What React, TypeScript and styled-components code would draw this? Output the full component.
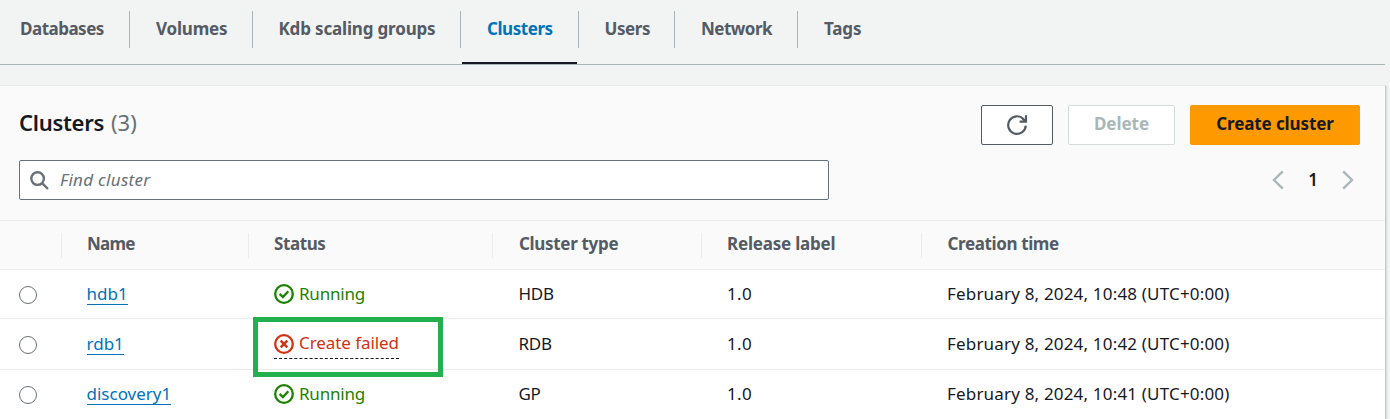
import React from "react";
import styled, { createGlobalStyle, css } from "styled-components";

const GlobalStyle = createGlobalStyle`
  *, *::before, *::after { box-sizing: border-box; }
  body {
    margin: 0;
    background: #f2f3f3;
    overflow: hidden;
    font-family: "Noto Sans", sans-serif;
    font-size: 17px;
    line-height: 24px;
    color: #16191f;
  }
`;

const Page = styled.main`
  position: relative;
  width: 1390px;
  height: 419px;
  padding-right: 4px;
  overflow: hidden;
`;

const Tracked = styled.span<{ $track?: number }>`
  letter-spacing: ${({ $track = 0 }) => $track}px;
  white-space: nowrap;
`;

const TabBar = styled.nav`
  display: flex;
  height: 65px;
  margin-right: 1px;
  border-bottom: 1px solid #aab7b8;
`;

const Tab = styled.a<{ $width: number; $active?: boolean }>`
  display: flex;
  flex-direction: column;
  justify-content: space-between;
  width: ${({ $width }) => $width}px;
  padding-top: 11px;
  font-weight: 700;
  color: ${({ $active }) => ($active ? "#0073bb" : "#545b64")};

  &:last-child > span { border-right: none; }
  ${({ $active }) =>
    $active &&
    css`
      &::after {
        content: "";
        height: 2px;
        margin: 0 2px 0 1px;
        background: #16191f;
      }
    `}
`;

const TabLabel = styled.span<{ $indent: number }>`
  display: flex;
  align-items: center;
  height: 37px;
  padding-left: ${({ $indent }) => $indent}px;
  padding-bottom: 2px;
  border-right: 1px solid #aab7b8;
`;

const Card = styled.section`
  height: 360px;
  margin-top: 20px;
  background: #fff;
  border-top: 1px solid #eaeded;
  border-right: 1px solid #c6cbcc;
  box-shadow: 1px 1px 1px rgba(0, 28, 36, 0.1);
`;

const CardHeader = styled.header`
  height: 134px;
  padding: 19px 25px 0 19px;
  background: #fafafa;
`;

const HeaderRow = styled.div`
  display: flex;
  align-items: center;
  justify-content: space-between;
  height: 40px;
  margin-bottom: 15px;
`;

const Title = styled.h2`
  margin: 0;
  padding-bottom: 6px;
  font-size: 22px;
  font-weight: 600;
`;

const Count = styled.span`
  margin-left: 7px;
  font-weight: 400;
  color: #687078;
`;

const Actions = styled.div`
  display: flex;
  gap: 15px;
`;

const tones = {
  normal: css`background: #fff; border-color: #545b64; color: #545b64;`,
  disabled: css`background: #fff; border-color: #d5dbdb; color: #aab7b8;`,
  primary: css`background: #ff9900; border-color: #ff9900; color: #16191f;`,
};

const Button = styled.button<{ $tone: keyof typeof tones; $width: number }>`
  display: flex;
  align-items: center;
  justify-content: center;
  width: ${({ $width }) => $width}px;
  height: 40px;
  padding: 0 0 2px;
  border: 1px solid;
  border-radius: 2px;
  font: 700 17px/24px "Noto Sans", sans-serif;
  ${({ $tone }) => tones[$tone]}

  svg { margin-top: 2px; }
`;

const SearchBox = styled.div`
  display: flex;
  align-items: center;
  width: 810px;
  height: 40px;
  padding-left: 10px;
  gap: 11px;
  background: #fff;
  border: 1px solid #687078;
  border-radius: 2px;
  font-style: italic;
  color: #687078;

  span { padding-bottom: 1px; }
`;

const Pager = styled.div`
  display: flex;
  align-items: center;
  gap: 24px;
  padding-right: 6px;
  color: #aab7b8;

  strong { width: 10px; font-weight: 600; color: #16191f; text-align: center; }
`;

const columns = "62px 187px 244px 209px 220px 1fr";

const HeadRow = styled.div`
  display: grid;
  grid-template-columns: ${columns};
  align-items: center;
  height: 50px;
  background: #fafafa;
  border-top: 1px solid #eaeded;
  border-bottom: 1px solid #eaeded;
  font-weight: 700;
  color: #545b64;
`;

const HeadCell = styled.div<{ $indent?: number }>`
  display: flex;
  align-items: center;
  height: 25px;
  padding-left: ${({ $indent = 25 }) => $indent}px;
  padding-bottom: 2px;
  border-right: 1px solid #eaeded;

  &:last-child { border-right: none; }
`;

const Row = styled.div<{ $height: number }>`
  display: grid;
  grid-template-columns: ${columns};
  align-items: center;
  height: ${({ $height }) => $height}px;
  border-bottom: 1px solid #eaeded;

  &:last-child { border-bottom-color: transparent; }
`;

const Cell = styled.div<{ $indent?: number }>`
  display: flex;
  align-items: center;
  height: 24px;
  padding-left: ${({ $indent = 25 }) => $indent}px;
`;

const Radio = styled.span`
  width: 18px;
  height: 18px;
  margin: 1px 0 0 19px;
  border: 1px solid #687078;
  border-radius: 50%;
  background: #fff;
`;

const Link = styled.a`
  height: 23px;
  margin-bottom: 2px;
  line-height: 24px;
  border-bottom: 1px solid #0073bb;
  color: #0073bb;
`;

const Status = styled.span<{ $failed?: boolean }>`
  display: flex;
  align-items: center;
  gap: 5px;
  color: ${({ $failed }) => ($failed ? "#d13212" : "#1d8102")};
  ${({ $failed }) =>
    $failed &&
    css`
      height: 27px;
      margin-top: 3px;
      padding-bottom: 4px;
      border-bottom: 1px dashed #16191f;

      svg { margin-top: 2px; }
    `}
`;

const Highlight = styled.div`
  position: absolute;
  left: 253px;
  top: 317px;
  width: 190px;
  height: 60px;
  border: 5px solid #22b14c;
`;

const RefreshIcon = () => (
  <svg width="22" height="22" viewBox="0 0 22 22" fill="none" stroke="currentColor" strokeWidth="2.2">
    <path d="M19.8 11.6A8.8 8.8 0 1 1 17.4 5" />
    <path d="M20 1.2V7.6H13.6" />
    <path d="M16.6 4.6L20 7.6" />
  </svg>
);

const SearchIcon = () => (
  <svg width="19" height="19" viewBox="0 0 19 19" fill="none" stroke="currentColor" strokeWidth="2.4">
    <circle cx="7.6" cy="7.6" r="6.3" />
    <path d="M12.1 12.1L18 18" />
  </svg>
);

const Chevron = ({ right = false }: { right?: boolean }) => (
  <svg width="12" height="20" viewBox="0 0 12 20" fill="none" stroke="currentColor" strokeWidth="2.4">
    <path d={right ? "M1.2 1.4L10 10L1.2 18.6" : "M10.8 1.4L2 10L10.8 18.6"} />
  </svg>
);

const StatusIcon = ({ failed = false }: { failed?: boolean }) => (
  <svg width="20" height="20" viewBox="0 0 20 20" fill="none" stroke="currentColor" strokeWidth="2.3">
    <circle cx="10" cy="10" r="8.8" />
    {failed ? <path d="M6.7 6.7L13.3 13.3M13.3 6.7L6.7 13.3" strokeWidth="2.5" /> : <path d="M5.6 9.9L8.9 13L14.3 7.2" />}
  </svg>
);

const tabs = [
  { label: "Databases", width: 130, indent: 20, track: -0.5 },
  { label: "Volumes", width: 123, indent: 26, track: -0.2 },
  { label: "Kdb scaling groups", width: 208, indent: 25.5, track: -0.17 },
  { label: "Clusters", width: 118, indent: 26, track: -0.45 },
  { label: "Users", width: 96, indent: 25.5, track: -0.4 },
  { label: "Network", width: 123, indent: 26, track: -0.52 },
  { label: "Tags", width: 90, indent: 26, track: -0.13 },
];

const activeTab = "Clusters";

const headings = [
  { label: "Name", track: -0.8 },
  { label: "Status", track: -0.4 },
  { label: "Cluster type", track: -0.32, indent: 26 },
  { label: "Release label", track: -0.2 },
  { label: "Creation time", track: -0.38, indent: 25.5 },
];

const clusters = [
  { name: "hdb1", type: "HDB", time: "10:48", height: 49 },
  { name: "rdb1", type: "RDB", time: "10:42", height: 51, failed: true },
  { name: "discovery1", type: "GP", time: "10:41", height: 49 },
];

export default function App() {
  return (
    <Page>
      <GlobalStyle />
      <TabBar>
        {tabs.map((tab) => (
          <Tab key={tab.label} $width={tab.width} $active={tab.label === activeTab}>
            <TabLabel $indent={tab.indent}>
              <Tracked $track={tab.track}>{tab.label}</Tracked>
            </TabLabel>
          </Tab>
        ))}
      </TabBar>
      <Card>
        <CardHeader>
          <HeaderRow>
            <Title>
              <Tracked $track={-0.3}>Clusters</Tracked>
              <Count>(3)</Count>
            </Title>
            <Actions>
              <Button $tone="normal" $width={72} aria-label="Refresh"><RefreshIcon /></Button>
              <Button $tone="disabled" $width={107} disabled><Tracked $track={-0.04}>Delete</Tracked></Button>
              <Button $tone="primary" $width={170}><Tracked $track={-0.12}>Create cluster</Tracked></Button>
            </Actions>
          </HeaderRow>
          <HeaderRow>
            <SearchBox>
              <SearchIcon />
              <Tracked $track={0.3}>Find cluster</Tracked>
            </SearchBox>
            <Pager>
              <Chevron />
              <strong>1</strong>
              <Chevron right />
            </Pager>
          </HeaderRow>
        </CardHeader>
        <HeadRow>
          <HeadCell />
          {headings.map((heading) => (
            <HeadCell key={heading.label} $indent={heading.indent}>
              <Tracked $track={heading.track}>{heading.label}</Tracked>
            </HeadCell>
          ))}
        </HeadRow>
        {clusters.map((cluster) => (
          <Row key={cluster.name} $height={cluster.height}>
            <Radio />
            <Cell $indent={24.5}><Link>{cluster.name}</Link></Cell>
            <Cell>
              <Status $failed={cluster.failed}>
                <StatusIcon failed={cluster.failed} />
                <Tracked $track={cluster.failed ? -0.07 : -0.2}>{cluster.failed ? "Create failed" : "Running"}</Tracked>
              </Status>
            </Cell>
            <Cell $indent={25.5}><Tracked $track={-0.3}>{cluster.type}</Tracked></Cell>
            <Cell><Tracked $track={0.3}>1.0</Tracked></Cell>
            <Cell><Tracked $track={0.18}>{`February 8, 2024, ${cluster.time} (UTC+0:00)`}</Tracked></Cell>
          </Row>
        ))}
      </Card>
      <Highlight />
    </Page>
  );
}
